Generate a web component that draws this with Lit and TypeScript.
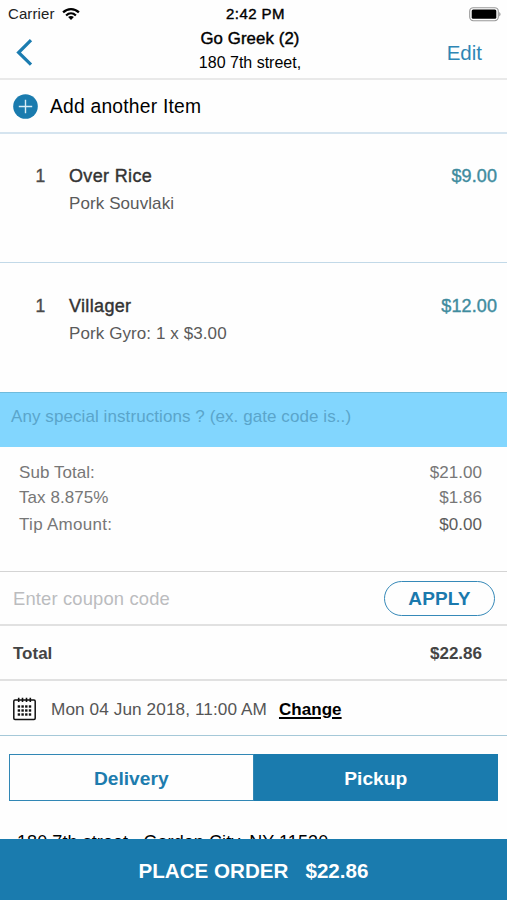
import { LitElement, html, css, svg } from "lit";
import { customElement, property } from "lit/decorators.js";

interface Line {
  qty: number;
  name: string;
  detail: string;
  price: string;
}

const LINES: Line[] = [
  { qty: 1, name: "Over Rice", detail: "Pork Souvlaki", price: "$9.00" },
  { qty: 1, name: "Villager", detail: "Pork Gyro: 1 x $3.00", price: "$12.00" },
];

@customElement("order-line")
class OrderLine extends LitElement {
  @property({ attribute: false }) line!: Line;

  static styles = css`
    :host { display: block; height: 129px; box-sizing: border-box; padding-top: 1px; }
    :host(.divided) { padding-top: 0; }
    .row { display: grid; grid-template-columns: 69px 1fr auto; padding: 29px 10px 0 0; line-height: 26px; white-space: nowrap; }
    .qty { padding-left: 35.5px; font-size: 17.5px; color: #4a4a4a; -webkit-text-stroke: 0.4px; }
    .name { font-size: 18px; letter-spacing: 0.34px; color: #333; -webkit-text-stroke: 0.4px; }
    .detail { grid-column: 2; margin-top: 2px; font-size: 17px; letter-spacing: 0.09px; color: #5a5a5a; }
    .price { font-size: 18px; letter-spacing: 0.1px; color: #3f8c9e; -webkit-text-stroke: 0.4px; }
  `;

  render() {
    return html`<div class="row">
      <span class="qty">${this.line.qty}</span>
      <span class="name">${this.line.name}</span>
      <span class="price">${this.line.price}</span>
      <span class="detail">${this.line.detail}</span>
    </div>`;
  }
}

@customElement("app-root")
class AppRoot extends LitElement {
  static styles = css`
    :host {
      display: flex; flex-direction: column; width: 507px; height: 900px; overflow: hidden;
      background: #fefefe; color: #000; font-family: "Liberation Sans", Arial, sans-serif; white-space: nowrap;
    }
    * { box-sizing: border-box; }
    svg { display: block; }
    .medium { -webkit-text-stroke: 0.4px; }
    .status { height: 27px; display: grid; grid-template-columns: 1fr auto 1fr; align-items: center; padding: 1px 6px 0 8px; font-size: 15px; line-height: 26px; }
    .carrier { display: flex; align-items: center; gap: 7px; color: #222; letter-spacing: 0.1px; }
    .time { letter-spacing: 0.42px; padding-left: 2px; }
    .battery { justify-self: end; }
    .nav { height: 53px; display: grid; grid-template-columns: 1fr auto 1fr; padding-right: 7px; border-bottom: 2px solid #e9e9e9; }
    .back { padding: 12px 0 0 16px; }
    .heading { text-align: center; line-height: 24px; }
    .title { font-size: 16.8px; letter-spacing: 0.1px; }
    .street { font-size: 16px; }
    .edit { justify-self: end; padding-right: 18px; line-height: 51px; font-size: 20.5px; color: #2e86b5; }
    .add { height: 54px; display: flex; align-items: center; gap: 12px; padding-left: 13px; border-bottom: 2px solid #d5e4ef; font-size: 19.3px; letter-spacing: 0.21px; }
    .add span { padding-top: 2px; }
    .divided { border-bottom: 1px solid #c2d9e8; }
    .notes { height: 55px; border-top: 1px solid #6fbbdc; background: #82d6fe; color: #5aa5cb; padding: 12px 0 0 11px; font-size: 17px; letter-spacing: 0.08px; line-height: 24px; }
    .sums { height: 125px; border-bottom: 1px solid #d4d4d4; padding: 14px 25px 0 19px; font-size: 17px; letter-spacing: 0.06px; line-height: 24px; color: #777; }
    .sum { display: flex; justify-content: space-between; }
    .tax { margin-top: 1px; }
    .tip { margin-top: 3px; }
    .tip span:first-child { letter-spacing: 0.3px; }
    .tip .value { color: #5c5c5c; }
    .coupon { height: 54px; display: flex; align-items: center; justify-content: space-between; padding: 0 12px 0 13px; border-bottom: 2px solid #e1e1e1; font-size: 18.4px; letter-spacing: 0.15px; color: #bbbcbe; }
    .coupon span { padding-top: 2px; }
    .apply { width: 111px; height: 35px; margin-top: 1px; border: 1px solid #3689b8; border-radius: 18px; text-align: center; line-height: 34px; font-size: 19px; font-weight: 700; color: #1a79ad; }
    .total { height: 55px; display: flex; align-items: center; justify-content: space-between; padding: 2px 25px 0 13px; border-bottom: 2px solid #e1e1e1; font-size: 17px; font-weight: 700; color: #444; }
    .when { height: 55px; display: flex; align-items: center; padding: 1px 0 0 12px; border-bottom: 1px solid #a5c8d8; font-size: 17.2px; color: #555; }
    .date { margin-left: 14px; padding-top: 1px; letter-spacing: 0.09px; }
    .change { margin-left: 12px; padding-top: 2px; font-size: 17px; letter-spacing: 0.05px; font-weight: 700; color: #000; text-decoration: underline; text-decoration-thickness: 1.5px; text-underline-offset: 2px; }
    .tabs { height: 47px; flex: none; margin: 18px 9px 0; display: grid; grid-template-columns: 1fr 1fr; font-size: 19.2px; font-weight: 700; text-align: center; line-height: 43px; }
    .tab { padding-top: 2px; border: 1px solid #3187b5; color: #1d7cae; }
    .active { background: #1a7bae; border-color: #1a7bae; color: #fff; }
    .address { height: 38px; flex: none; padding: 29px 0 0 17px; font-size: 18px; letter-spacing: 0.08px; line-height: 24px; }
    .place { position: relative; flex: 1; display: flex; align-items: center; justify-content: center; gap: 17px; padding-top: 2px; background: #1a7bae; color: #fff; font-size: 20.6px; font-weight: 700; }
  `;

  render() {
    return html`
      <div class="status">
        <div class="carrier">Carrier
          <svg width="18" height="14" viewBox="0 0 18 14" fill="none" stroke="#000" stroke-width="2.2">
            <path d="M1.1 5.4C5.6 .9 12.4.9 16.9 5.4M4.1 8.5C7 5.7 11 5.7 13.9 8.5" />
            <path d="M9 12.9 6.1 10C7.8 8.5 10.2 8.5 11.9 10Z" fill="#000" stroke="none" />
          </svg>
        </div>
        <div class="time medium">2:42 PM</div>
        <svg class="battery" width="32" height="15" viewBox="0 0 32 15">
          <rect x=".7" y=".7" width="28.6" height="13" rx="3.6" fill="#fff" stroke="#999" stroke-width="1.1" />
          <rect x="2.7" y="2.6" width="24.6" height="9.2" rx="1.5" />
          <path d="M30.3 5C31.9 5.7 31.9 8.7 30.3 9.4Z" fill="#888" />
        </svg>
      </div>
      <div class="nav">
        <div class="back">
          <svg width="17" height="28" viewBox="0 0 17 28" fill="none" stroke="#1b7cb0" stroke-width="3.2">
            <path d="M15 1.2 2.6 13.5 15 25.7" />
          </svg>
        </div>
        <div class="heading">
          <div class="title medium">Go Greek (2)</div>
          <div class="street">180 7th street,</div>
        </div>
        <div class="edit">Edit</div>
      </div>
      <div class="add">
        <svg width="25" height="25" viewBox="0 0 25 25">
          <circle cx="12.5" cy="12.5" r="12.3" fill="#1a7bae" />
          <path d="M12.5 5.8V19.2M5.8 12.5H19.2" stroke="#d8ecf6" stroke-width="1.4" />
        </svg>
        <span>Add another Item</span>
      </div>
      ${LINES.map((line, i) => html`<order-line class=${i < LINES.length - 1 ? "divided" : ""} .line=${line}></order-line>`)}
      <div class="notes">Any special instructions ? (ex. gate code is..)</div>
      <div class="sums">
        <div class="sum"><span>Sub Total:</span><span>$21.00</span></div>
        <div class="sum tax"><span>Tax 8.875%</span><span>$1.86</span></div>
        <div class="sum tip"><span>Tip Amount:</span><span class="value">$0.00</span></div>
      </div>
      <div class="coupon"><span>Enter coupon code</span><div class="apply">APPLY</div></div>
      <div class="total"><span>Total</span><span>$22.86</span></div>
      <div class="when">
        <svg width="25" height="24" viewBox="0 0 25 24">
          <rect x="1.8" y="3" width="21.4" height="19.4" rx="1.2" fill="none" stroke="#111" stroke-width="1.5" />
          <path d="M6.7 .8V5M10.5 .8V5M14.5 .8V5M18.3 .8V5" stroke="#111" stroke-width="1.6" />
          ${[9.5, 13.5, 17.5].map((y) => [6.9, 10.6, 14.3, 18].map((x) => svg`<rect x=${x - 1.2} y=${y - 1.2} width="2.4" height="2.4" fill="#111" />`))}
        </svg>
        <span class="date">Mon 04 Jun 2018, 11:00 AM</span>
        <span class="change">Change</span>
      </div>
      <div class="tabs"><div class="tab">Delivery</div><div class="tab active">Pickup</div></div>
      <div class="address">180 7th street , Garden City, NY 11530</div>
      <div class="place"><span>PLACE ORDER</span><span>$22.86</span></div>
    `;
  }
}
